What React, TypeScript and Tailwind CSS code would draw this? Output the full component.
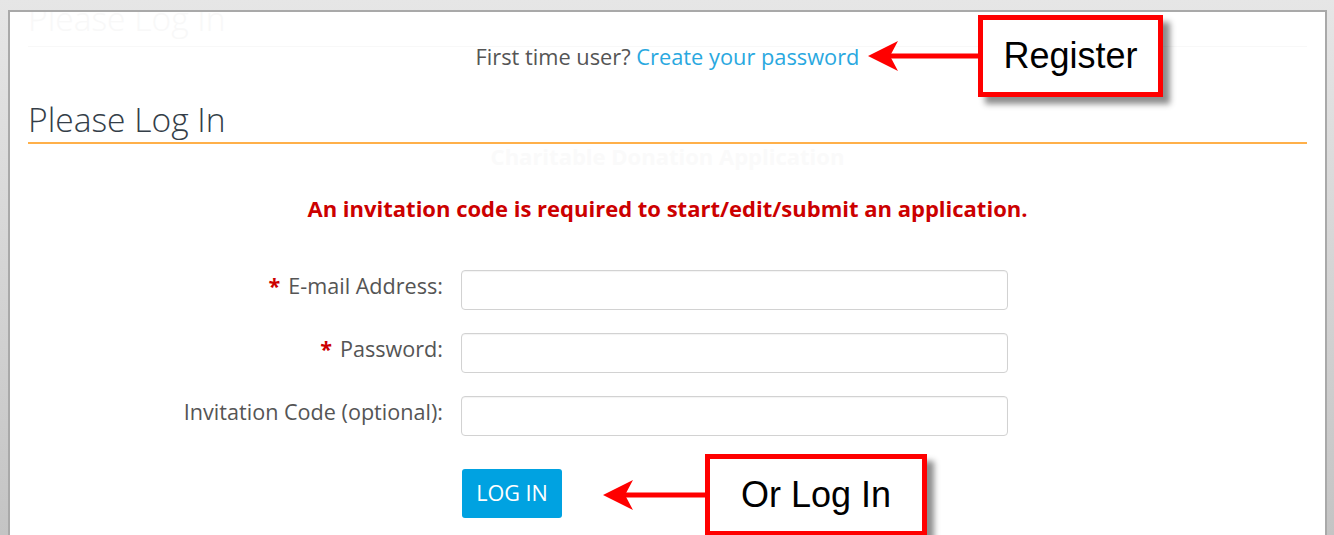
import type { ReactNode } from "react"

const sans = "font-['Open_Sans',sans-serif]"

// Red call-out box with a left-pointing arrow drawn in front of it
function Callout({ label, arrow, className }: { label: string; arrow: number; className: string }) {
  return (
    <div className={`absolute flex items-center ${className}`}>
      <svg width={arrow} height="32" viewBox={`0 0 ${arrow} 32`} className="shrink-0">
        <rect x="20" y="13.5" width={arrow - 20} height="5" fill="#ff0000" />
        <path d="M0 16 L30 1 L22 16 L30 31 Z" fill="#ff0000" />
      </svg>
      <div className="flex h-[82px] shrink-0 items-center justify-center border-[5px] border-[#ff0000] bg-white shadow-[7px_7px_6px_rgba(0,0,0,0.45)] font-['Liberation_Sans',Arial,sans-serif] text-[36px] text-black">
        {label}
      </div>
    </div>
  )
}

function Row({ label, required, children }: { label: string; required?: boolean; children?: ReactNode }) {
  return (
    <>
      <label className="flex items-center justify-end pb-[7px] text-[21.6px] text-[#555]">
        {required && <span className="mr-[8px] font-bold text-[#c00]">*</span>}
        {label}
      </label>
      {children ?? (
        <input className="h-[40px] w-full rounded-[4px] border border-[#d2d2d2] bg-white px-3 shadow-[inset_0_1px_1px_rgba(0,0,0,0.05)] outline-none" />
      )}
    </>
  )
}

export default function App() {
  return (
    <div className="h-[535px] w-[1334px] overflow-hidden bg-gradient-to-b from-[#e6e6e6] to-[#c4c4c4] pl-[8px] pr-[7px] pt-[10px]">
      <div className={`relative h-full overflow-hidden border-l-2 border-r-2 border-t-2 border-[#a9a9a9] bg-white px-[18px] ${sans}`}>
        <div className="-mt-[14px] border-b border-[#f8f8f8] pb-[8px] text-[33.6px] font-light leading-[40px] text-[#f8f8f8]">
          Please Log In
        </div>

        <p className="-mt-[5px] text-center text-[21.8px] leading-[30px] text-[#555]">
          First time user? <a className="text-[#29a8e0]">Create your password</a>
        </p>

        <h1 className="mt-[27px] border-b-2 border-[#ffb04a] pb-[3px] text-[33.6px] font-light leading-[40px] text-[#343e48]">
          Please Log In
        </h1>
        <p className="text-center text-[22px] font-bold leading-[24px] text-[#fafafa]">Charitable Donation Application</p>

        <p className="mt-[25px] text-center text-[22px] font-bold leading-[30px] text-[#cc0000]">
          An invitation code is required to start/edit/submit an application.
        </p>

        <div className="mt-[47px] grid grid-cols-[415px_547px] gap-x-[18px] gap-y-[23px]">
          <Row label="E-mail Address:" required />
          <Row label="Password:" required />
          <Row label="Invitation Code (optional):" />
          <div />
          <div className="pt-[10px]">
            <button className="ml-px h-[49px] w-[100px] rounded-[3px] bg-[#00a2e1] text-[21.6px] text-white">LOG IN</button>
          </div>
        </div>

        <Callout label="Register" arrow={110} className="left-[858px] top-[3px] [&>div]:w-[185px]" />
        <Callout label="Or Log In" arrow={102} className="left-[593px] top-[442px] [&>div]:w-[222px]" />
      </div>
    </div>
  )
}
